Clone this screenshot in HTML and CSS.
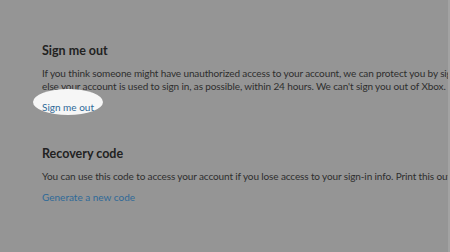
FILE: index.html
```html
<!DOCTYPE html>
<html>
<head>
<meta charset="utf-8">
<link rel="stylesheet" href="styles.css">
</head>
<body>
<div class="page">
  <div class="content">
    <section class="section first">
      <h2 class="title">Sign me out</h2>
      <p class="text">If you think someone might have unauthorized access to your account, we can protect you by signing you out everywhere</p>
      <p class="text">else your account is used to sign in, as possible, within 24 hours. We can't sign you out of Xbox.</p>
      <div class="link-wrap">
        <span class="glow"></span>
        <a class="link" href="#">Sign me out</a>
      </div>
    </section>
    <section class="section">
      <h2 class="title">Recovery code</h2>
      <p class="text">You can use this code to access your account if you lose access to your sign-in info. Print this out and keep it somewhere safe.</p>
      <div class="link-wrap">
        <a class="link" href="#">Generate a new code</a>
      </div>
    </section>
  </div>
  <div class="edge"></div>
</div>
</body>
</html>
```
FILE: styles.css
```css
html, body {
  margin: 0;
  padding: 0;
  width: 450px;
  height: 252px;
  overflow: hidden;
  background: #959595;
}
.page {
  display: flex;
  width: 450px;
  height: 252px;
  font-family: Lato, "Noto Sans", sans-serif;
}
.content {
  flex: 1;
  overflow: hidden;
  padding: 41px 0 0 42px;
  white-space: nowrap;
}
.edge {
  width: 2px;
  background: #a2a2a2;
}
.section {
  margin-bottom: 35px;
}
.title {
  margin: 0 0 6px 0;
  font-size: 12.5px;
  font-weight: 700;
  color: #222;
  line-height: 20px;
}
.text {
  margin: 0;
  font-size: 10px;
  letter-spacing: -0.12px;
  line-height: 13px;
  color: #2e2e2e;
}
.link-wrap {
  position: relative;
  margin-top: 2px;
  height: 14px;
}
.link {
  position: relative;
  font-size: 10px;
  line-height: 14px;
  color: #2f6a98;
  text-decoration: none;
}
.glow {
  position: absolute;
  left: -9px;
  top: -6px;
  width: 70px;
  height: 26px;
  border-radius: 50%;
  background: #f6f6f6;
  filter: blur(0.7px);
}
```
